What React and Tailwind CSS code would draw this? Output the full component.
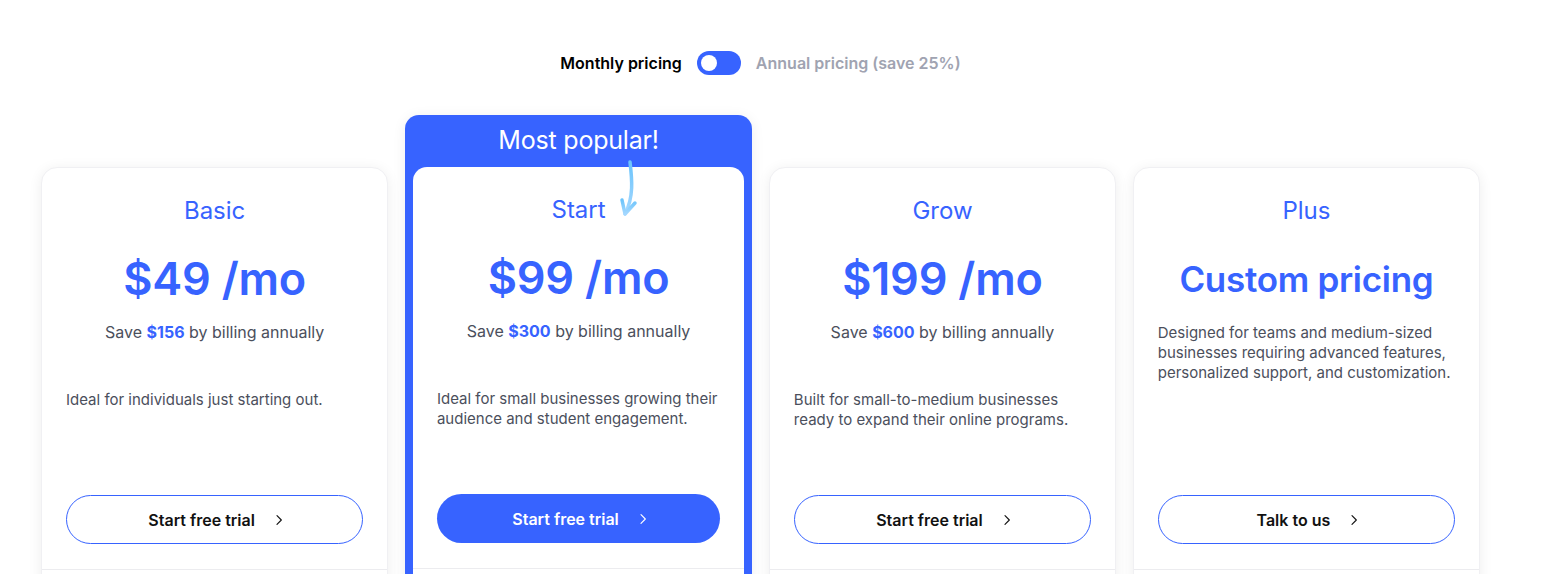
import React, { useState } from "react";

const plans = [
    {
        name: "Basic",
        price: "$49 /mo",
        save: "$156",
        desc: "Ideal for individuals just starting out.",
        cta: "Start free trial",
    },
    {
        name: "Start",
        price: "$99 /mo",
        save: "$300",
        desc: "Ideal for small businesses growing their audience and student engagement.",
        cta: "Start free trial",
        popular: true,
    },
    {
        name: "Grow",
        price: "$199 /mo",
        save: "$600",
        desc: "Built for small-to-medium businesses ready to expand their online programs.",
        cta: "Start free trial",
    },
    {
        name: "Plus",
        price: "Custom pricing",
        custom: true,
        desc: "Designed for teams and medium-sized businesses requiring advanced features, personalized support, and customization.",
        cta: "Talk to us",
    },
];

function Chevron() {
    return (
        <svg width="16" height="16" viewBox="0 0 24 24" fill="none" stroke="currentColor" strokeWidth="1.7" strokeLinecap="round" strokeLinejoin="round">
            <path d="M9 5.5l6.5 6.5-6.5 6.5" />
        </svg>
    );
}

function Arrow() {
    return (
        <svg className="absolute left-[205px] top-[-8px]" width="24" height="60" viewBox="0 0 24 60" fill="none">
            <defs>
                <linearGradient id="arr" x1="0" y1="0" x2="0" y2="1">
                    <stop offset="0" stopColor="#6cc4fb" />
                    <stop offset="1" stopColor="#a5d8ff" />
                </linearGradient>
            </defs>
            <path d="M12 3 C14 20 16 38 7 55" stroke="url(#arr)" strokeWidth="3.5" strokeLinecap="round" />
            <path d="M4 41 L7 55 L17 44" stroke="url(#arr)" strokeWidth="3.5" strokeLinecap="round" strokeLinejoin="round" />
        </svg>
    );
}

function PlanBody({ plan }) {
    return (
        <div className="relative flex flex-col h-[401px] px-6 pt-[29px] pb-[25px]">
            {plan.popular && <Arrow />}
            <h3 className="text-center text-[24px] leading-[28px] text-[#3763ff]">
                {plan.name}
            </h3>
            <div
                className={
                    "mt-[29px] text-center leading-[50px] font-semibold text-[#3763ff] " +
                    (plan.custom ? "text-[35px] tracking-[-0.3px]" : "text-[45px] tracking-[-0.2px]")
                }
            >
                {plan.price}
            </div>
            {plan.save ? (
                <>
                    <p className="mt-[16px] text-center text-[16px] leading-6 text-[#4b4f5c]">
                        Save <span className="font-bold text-[#3763ff]">{plan.save}</span> by billing annually
                    </p>
                    <p className="mt-[46px] text-[15px] leading-5 text-[#4b4f5c]">{plan.desc}</p>
                </>
            ) : (
                <p className="mt-[19px] text-[15px] leading-5 text-[#4b4f5c]">{plan.desc}</p>
            )}
            <button
                className={
                    "mt-auto h-[49px] w-full rounded-full flex items-center justify-center gap-[16px] pl-[6px] text-[16px] font-semibold " +
                    (plan.popular
                        ? "bg-[#3763ff] text-white"
                        : "border border-[#3763ff] text-[#111111] bg-white")
                }
            >
                {plan.cta}
                <Chevron />
            </button>
        </div>
    );
}

export default function App() {
    const [annual, setAnnual] = useState(false);

    return (
        <div className="min-h-[574px] bg-white overflow-hidden" style={{ fontFamily: "Inter, 'Noto Sans', sans-serif" }}>
            <div className="flex items-center justify-center gap-[15px] pt-[51px] w-[1521px]">
                <span className="text-[16px] font-semibold text-black">Monthly pricing</span>
                <button
                    onClick={() => setAnnual(!annual)}
                    className="w-[44px] h-[24px] rounded-full bg-[#3763ff] flex items-center px-[4px]"
                >
                    <span className={"block w-[16px] h-[16px] rounded-full bg-white " + (annual ? "ml-auto" : "")} />
                </button>
                <span className="text-[16px] font-semibold text-[#a0a3b1]">Annual pricing (save 25%)</span>
            </div>

            <div className="ml-[41px] mt-[40px] w-[1439px] grid grid-cols-4 gap-[16.7px] items-start">
                {plans.map((plan) =>
                    plan.popular ? (
                        <div key={plan.name} className="bg-[#3763ff] rounded-t-[14px] px-[8px] shadow-[0_2px_14px_rgba(0,0,0,0.07)]">
                            <div className="h-[52px] flex items-center justify-center text-white text-[25px] tracking-[-0.2px] pb-[1px]">
                                Most popular!
                            </div>
                            <div className="bg-white rounded-t-[14px]">
                                <PlanBody plan={plan} />
                                <div className="border-t border-[#ececef] h-[40px]" />
                            </div>
                        </div>
                    ) : (
                        <div
                            key={plan.name}
                            className="mt-[52px] bg-white rounded-[16px] border border-[#f0f0f3] shadow-[0_2px_14px_rgba(0,0,0,0.07)]"
                        >
                            <PlanBody plan={plan} />
                            <div className="border-t border-[#ececef] h-[40px]" />
                        </div>
                    )
                )}
            </div>
        </div>
    );
}
